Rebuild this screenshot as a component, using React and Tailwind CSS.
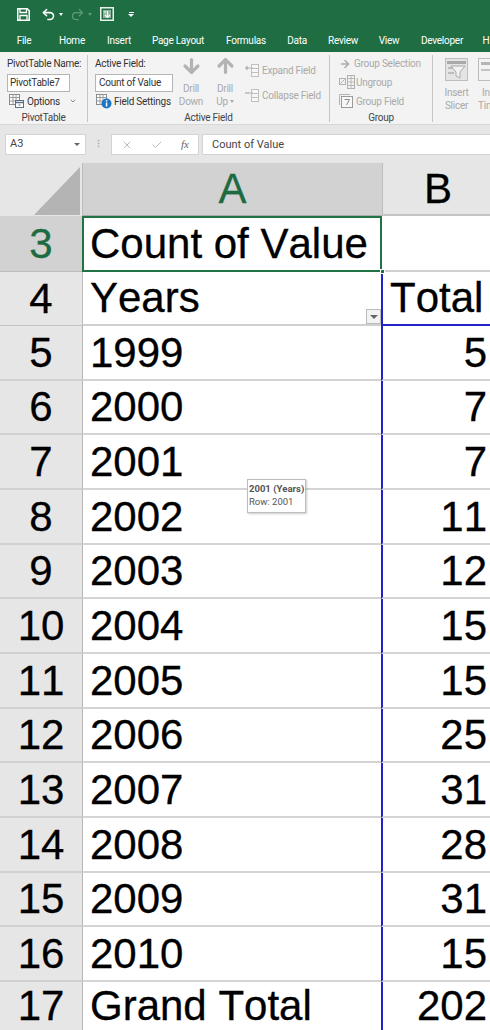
import React from 'react';
import { Undo2, Redo2, ArrowDown, ArrowUp, ArrowRight, X, Check, ChevronDown } from 'lucide-react';

const tabs = [
  ['File', 'w-[48px]'],
  ['Home', 'w-[48px]'],
  ['Insert', 'w-[46px]'],
  ['Page Layout', 'w-[72px]'],
  ['Formulas', 'w-[64px]'],
  ['Data', 'w-[38px]'],
  ['Review', 'w-[54px]'],
  ['View', 'w-[38px]'],
  ['Developer', 'w-[68px]'],
  ['H', 'w-[20px]'],
];

const rows = [
  { n: 5, label: '1999', value: '5' },
  { n: 6, label: '2000', value: '7' },
  { n: 7, label: '2001', value: '7' },
  { n: 8, label: '2002', value: '11' },
  { n: 9, label: '2003', value: '12' },
  { n: 10, label: '2004', value: '15' },
  { n: 11, label: '2005', value: '15' },
  { n: 12, label: '2006', value: '25' },
  { n: 13, label: '2007', value: '31' },
  { n: 14, label: '2008', value: '28' },
  { n: 15, label: '2009', value: '31' },
  { n: 16, label: '2010', value: '15' },
];

const rowHeights = {
  5: 'h-[55px]', 6: 'h-[54px]', 7: 'h-[55px]', 8: 'h-[55px]', 9: 'h-[54px]', 10: 'h-[55px]',
  11: 'h-[55px]', 12: 'h-[54px]', 13: 'h-[55px]', 14: 'h-[55px]', 15: 'h-[54px]', 16: 'h-[55px]',
};

const SaveIcon = () => (
  <svg width="13" height="13" viewBox="0 0 13 13" fill="none">
    <path d="M0.75 0.75h9.5l2 2v9.5H0.75z" stroke="#fff" strokeWidth="1.5" />
    <path d="M3 1v3.5h6.5V1" stroke="#fff" strokeWidth="1.3" />
    <path d="M3 12V7.5h7V12" stroke="#fff" strokeWidth="1.3" />
  </svg>
);

const PivotIcon = () => (
  <svg width="16" height="14" viewBox="0 0 16 14" fill="none" className="shrink-0">
    <rect x="0.5" y="0.5" width="10" height="10" fill="#fff" stroke="#8a8a8a" />
    <path d="M0.5 3.5h10M4 0.5v10M7 0.5v10M0.5 7h10" stroke="#9a9a9a" />
    <rect x="6.5" y="6.5" width="8" height="7" fill="#fff" stroke="#5a6f86" />
    <path d="M6.5 8.5h8" stroke="#5a6f86" strokeWidth="1.5" />
    <path d="M9.5 11h2" stroke="#5a6f86" />
  </svg>
);

const FieldSettingsIcon = () => (
  <svg width="16" height="15" viewBox="0 0 16 15" fill="none" className="shrink-0">
    <rect x="0.5" y="0.5" width="10" height="10" fill="#fff" stroke="#8a8a8a" />
    <path d="M0.5 3.5h10M4 0.5v10M7 0.5v10M0.5 7h10" stroke="#9a9a9a" />
    <circle cx="10.5" cy="9.5" r="5" fill="#1e74c4" />
    <rect x="9.8" y="8.5" width="1.5" height="4" fill="#fff" />
    <rect x="9.8" y="6.2" width="1.5" height="1.4" fill="#fff" />
  </svg>
);

const FieldToggleIcon = ({ plus }) => (
  <svg width="15" height="13" viewBox="0 0 15 13" fill="none" className="shrink-0">
    <path d={plus ? 'M0 4h4M2 2v4' : 'M0 4h4'} stroke="#a8a8a8" strokeWidth="1.2" />
    <rect x="6.5" y="0.5" width="7" height="12" fill="#f7f7f7" stroke="#c0c0c0" />
    <path d="M6.5 4.5h7M6.5 8.5h7" stroke="#c0c0c0" />
    <path d="M4 4h4" stroke="#b5b5b5" />
  </svg>
);

const UngroupIcon = () => (
  <svg width="16" height="14" viewBox="0 0 16 14" fill="none" className="shrink-0">
    <rect x="0.5" y="3.5" width="6" height="6" stroke="#b0b0b0" />
    <path d="M1.5 8.5l4-4" stroke="#b0b0b0" />
    <rect x="8.5" y="0.5" width="7" height="13" stroke="#b0b0b0" />
    <path d="M8.5 3.5h7M8.5 7h7M8.5 10.5h7M12 0.5v13" stroke="#b8b8b8" />
  </svg>
);

const GroupFieldIcon = () => (
  <svg width="14" height="14" viewBox="0 0 14 14" fill="none" className="shrink-0">
    <path d="M0.5 11V0.5H11" stroke="#b5b5b5" />
    <rect x="2.5" y="2.5" width="11" height="11" fill="#f7f7f7" stroke="#9a9a9a" />
    <path d="M5.5 5.5h5L7.5 11" stroke="#8a8a8a" />
  </svg>
);

const SlicerIcon = () => (
  <svg width="23" height="23" viewBox="0 0 23 23" fill="none">
    <rect x="0.5" y="0.5" width="22" height="22" fill="#e4e4e4" stroke="#bdbdbd" />
    <rect x="2" y="3" width="19" height="3" fill="#a9a9a9" />
    <rect x="3" y="9" width="9" height="2" fill="#bcbcbc" />
    <rect x="3" y="14" width="6" height="2" fill="#bcbcbc" />
    <path d="M6 8h14l-5 6v6l-4-2v-4z" fill="#f3f3f3" stroke="#a9a9a9" />
  </svg>
);

const TimelineIcon = () => (
  <svg width="23" height="23" viewBox="0 0 23 23" fill="none">
    <rect x="0.5" y="0.5" width="22" height="22" fill="#f3f3f3" stroke="#bdbdbd" />
    <rect x="3" y="4" width="17" height="3" fill="#b5b5b5" />
    <path d="M3 12h17" stroke="#c4c4c4" strokeWidth="2" />
  </svg>
);

const QatIcon = () => (
  <svg width="14" height="14" viewBox="0 0 14 14" fill="none">
    <rect x="0.75" y="0.75" width="12.5" height="12.5" stroke="#e8f1ec" strokeWidth="1.5" />
    <path d="M3 3h8v8H3z" fill="#8fb5a0" />
    <path d="M7.5 4v6M5 8l2.5 2.5L10 8M4 5h2" stroke="#fff" strokeWidth="1.2" />
  </svg>
);

const GroupLabel = ({ children }) => (
  <div className="mt-auto -mb-[2px] text-center text-[10px] leading-[12px] text-[#444]">{children}</div>
);

function Ribbon() {
  return (
    <div className="flex h-[73px] bg-[#f3f3f3] border-b border-[#d8d8d8] text-[10px] tracking-[-0.25px] leading-[13px] text-[#333] overflow-hidden">
      <div className="w-[88px] shrink-0 h-[67px] mt-[3px] border-r border-[#c6c6c6] flex flex-col">
        <div className="pl-[7px]">
          <div className="mt-[2px] whitespace-nowrap">PivotTable Name:</div>
          <div className="mt-[4px] w-[63px] h-[18px] bg-white border border-[#b5b5b5] pl-[2px] leading-[16px]">PivotTable7</div>
          <div className="flex items-center gap-[2px] pl-[2px] h-[18px]">
            <PivotIcon />
            <span>Options</span>
            <ChevronDown size={8} strokeWidth={2} className="ml-[7px] text-[#555]" />
          </div>
        </div>
        <GroupLabel>PivotTable</GroupLabel>
      </div>

      <div className="w-[242px] shrink-0 h-[67px] mt-[3px] border-r border-[#c6c6c6] flex flex-col">
        <div className="flex h-[53px]">
          <div className="w-[86px] shrink-0 pl-[7px]">
            <div className="mt-[2px]">Active Field:</div>
            <div className="mt-[4px] w-[78px] h-[18px] bg-white border border-[#b5b5b5] pl-[3px] leading-[16px] whitespace-nowrap">Count of Value</div>
            <div className="flex items-center gap-[2px] pl-[1px] h-[18px] whitespace-nowrap">
              <FieldSettingsIcon />
              <span>Field Settings</span>
            </div>
          </div>
          <div className="w-[34px] shrink-0 flex flex-col items-center text-[#a9a9a9]">
            <ArrowDown size={25} strokeWidth={3.5} className="text-[#b3b3b3]" />
            <div className="mt-[5px] text-center">Drill<br />Down</div>
          </div>
          <div className="w-[34px] shrink-0 flex flex-col items-center text-[#a9a9a9]">
            <ArrowUp size={25} strokeWidth={3.5} className="text-[#b3b3b3]" />
            <div className="mt-[5px] text-center">
              Drill<br />
              <span className="inline-flex items-center gap-[2px]">
                Up<span className="w-0 h-0 border-x-[2px] border-x-transparent border-t-[3px] border-t-[#a9a9a9]"></span>
              </span>
            </div>
          </div>
          <div className="flex flex-col pl-[3px] pt-[9px] gap-[12px] text-[#a9a9a9] whitespace-nowrap">
            <div className="flex items-center gap-[2px]"><FieldToggleIcon plus /><span>Expand Field</span></div>
            <div className="flex items-center gap-[2px]"><FieldToggleIcon /><span>Collapse Field</span></div>
          </div>
        </div>
        <GroupLabel>Active Field</GroupLabel>
      </div>

      <div className="w-[103px] shrink-0 h-[67px] mt-[3px] border-r border-[#c6c6c6] flex flex-col text-[#a9a9a9] whitespace-nowrap">
        <div className="pl-[9px]">
          <div className="mt-[2px] flex items-center gap-[3px] h-[13px]"><ArrowRight size={12} strokeWidth={3} className="text-[#aaa] shrink-0" /><span>Group Selection</span></div>
          <div className="mt-[5px] flex items-center gap-[1px] h-[14px]"><UngroupIcon /><span>Ungroup</span></div>
          <div className="mt-[5px] flex items-center gap-[3px] h-[14px]"><GroupFieldIcon /><span>Group Field</span></div>
        </div>
        <GroupLabel>Group</GroupLabel>
      </div>

      <div className="flex pl-[12px] mt-[6px] text-[#a9a9a9] whitespace-nowrap">
        <div className="w-[23px] flex flex-col items-center"><SlicerIcon /><div className="mt-[5px] text-center">Insert<br />Slicer</div></div>
        <div className="ml-[10px] w-[23px] flex flex-col items-start"><TimelineIcon /><div className="mt-[5px] pl-[4px]">In<br /><span className="-ml-[4px]">Tim</span></div></div>
      </div>
    </div>
  );
}

function FormulaBar() {
  return (
    <div className="flex items-start h-[38px] bg-[#e6e6e6] pt-[9px] text-[11px] text-[#444]">
      <div className="ml-[5px] w-[81px] h-[21px] bg-white border border-[#d4d4d4] flex items-center justify-between pl-[4px] pr-[5px]">
        <span>A3</span>
        <span className="w-0 h-0 border-x-[3px] border-x-transparent border-t-[3px] border-t-[#666]"></span>
      </div>
      <div className="w-[25px] h-[21px] flex items-center justify-center text-[#aaa] text-[9px] font-bold">⋮</div>
      <div className="w-[88px] h-[21px] bg-white border border-[#d4d4d4] flex items-center justify-between pl-[9px] pr-[9px]">
        <X size={12} className="text-[#bbb]" />
        <Check size={12} className="text-[#bbb]" />
        <span className="font-['Liberation_Serif',serif] italic text-[11px] text-[#666]">fx</span>
      </div>
      <div className="ml-[3px] flex-1 h-[21px] bg-white border-y border-l border-[#d4d4d4] pl-[9px] leading-[19px]">Count of Value</div>
    </div>
  );
}

function Cell({ className, children }) {
  return <div className={`h-full flex items-center text-[42px] leading-none ${className}`}>{children}</div>;
}

function Sheet() {
  return (
    <div className="relative font-['Liberation_Sans',Arial,sans-serif] text-black [font-kerning:none] [-webkit-text-stroke-width:0.3px]">
      <div className="grid grid-cols-[83px_299px_1fr] h-[53px] bg-[#e6e6e6] text-[42px] leading-none">
        <div className="border-r border-[#bdbdbd] flex justify-end items-end pr-[2px] pb-[1px]">
          <svg width="46" height="48" viewBox="0 0 46 48"><path d="M46 0v48H0z" fill="#b4b4b4" /></svg>
        </div>
        <div className="bg-[#d2d2d2] flex items-center justify-center text-[#1e6b41] border-b border-[#ababab]">A</div>
        <div className="flex items-center pl-[41px] border-l border-[#bdbdbd] border-b-2 border-b-[#c4c4c4]">B</div>
      </div>

      <div className="relative grid grid-cols-[83px_299px_1fr] h-[56px]">
        <div className="bg-[#d2d2d2] border-r border-[#ababab] border-b border-b-[#bdbdbd] flex items-center justify-center text-[42px] leading-none text-[#1e6b41]">3</div>
        <Cell className="border-2 border-[#217346] -ml-px pl-[6px] whitespace-nowrap bg-white">Count of Value</Cell>
        <div className="border-b-2 border-[#d0d0d0] bg-white"></div>
        <span className="absolute left-[380px] bottom-[-2px] w-[5px] h-[5px] bg-[#217346] border border-white"></span>
      </div>

      <div className="grid grid-cols-[83px_298px_1fr] h-[54px]">
        <div className="bg-[#e6e6e6] border-r border-[#bdbdbd] border-b border-b-[#c4c4c4] flex items-center justify-center text-[42px] leading-none">4</div>
        <Cell className="relative pl-[7px] border-b-2 border-[#d0d0d0]">
          Years
          <span className="absolute right-0 bottom-0 w-[15px] h-[15px] bg-[#f3f3f3] border border-[#bcbcbc] flex items-center justify-center">
            <span className="w-0 h-0 border-x-[4px] border-x-transparent border-t-[4px] border-t-[#666]"></span>
          </span>
        </Cell>
        <Cell className="pl-[7px] border-l-2 border-b-2 border-[#2222cc] whitespace-nowrap">Total</Cell>
      </div>

      {rows.map((row) => (
        <div key={row.n} className={`grid grid-cols-[83px_298px_1fr] ${rowHeights[row.n]}`}>
          <div className="bg-[#e6e6e6] border-r border-[#b5b5b5] border-b-2 border-b-[#d0d0d0] flex items-center justify-center text-[42px] leading-none">
            {row.n}
          </div>
          <Cell className="pl-[7px] border-b-2 border-[#d4d4d4]">{row.label}</Cell>
          <Cell className="justify-end pr-[3px] border-l-2 border-l-[#2222cc] border-b-2 border-b-[#d4d4d4]">{row.value}</Cell>
        </div>
      ))}

      <div className="grid grid-cols-[83px_298px_1fr] h-[48px] overflow-hidden">
        <div className="bg-[#e6e6e6] border-r border-[#b5b5b5] flex items-center justify-center text-[42px] leading-none">17</div>
        <Cell className="pl-[7px] whitespace-nowrap">Grand Total</Cell>
        <Cell className="justify-end pr-[3px] border-l-2 border-[#2222cc]">202</Cell>
      </div>

      <div className="absolute left-[247px] top-[316px] w-[59px] h-[34px] bg-white border border-[#bdbdbd] shadow-[1px_1px_2px_rgba(0,0,0,0.2)] px-[1px] font-['Roboto',sans-serif] [-webkit-text-stroke-width:0] text-[9.5px] leading-[13px] text-[#555]">
        <div className="mt-[2px] font-bold whitespace-nowrap">2001 (Years)</div>
        <div className="whitespace-nowrap">Row: 2001</div>
      </div>
    </div>
  );
}

export default function App() {
  return (
    <div className="w-[490px] h-[1030px] overflow-hidden bg-white font-['Roboto',sans-serif]">
      <div className="h-[52px] bg-[#1f6e43] text-white text-[10px] tracking-[-0.25px] overflow-hidden">
        <div className="flex items-center h-[28px] pl-[17px]">
          <SaveIcon />
          <Undo2 size={15} strokeWidth={2.5} className="ml-[11px]" />
          <span className="ml-[3px] w-0 h-0 border-x-[2px] border-x-transparent border-t-[3px] border-t-white"></span>
          <Redo2 size={15} strokeWidth={2} className="ml-[7px] text-[#5f9a7b]" />
          <span className="ml-[3px] w-0 h-0 border-x-[2px] border-x-transparent border-t-[3px] border-t-[#5f9a7b]"></span>
          <span className="ml-[8px]"><QatIcon /></span>
          <span className="ml-[14px] flex flex-col items-center gap-[1px]">
            <span className="w-[5px] h-px bg-white"></span>
            <span className="w-0 h-0 border-x-[3px] border-x-transparent border-t-[3px] border-t-white"></span>
          </span>
        </div>
        <div className="flex items-center h-[24px] pt-[1px] whitespace-nowrap">
          {tabs.map(([name, width]) => (
            <div key={name} className={`${width} shrink-0 text-center`}>{name}</div>
          ))}
        </div>
      </div>
      <Ribbon />
      <FormulaBar />
      <Sheet />
    </div>
  );
}
